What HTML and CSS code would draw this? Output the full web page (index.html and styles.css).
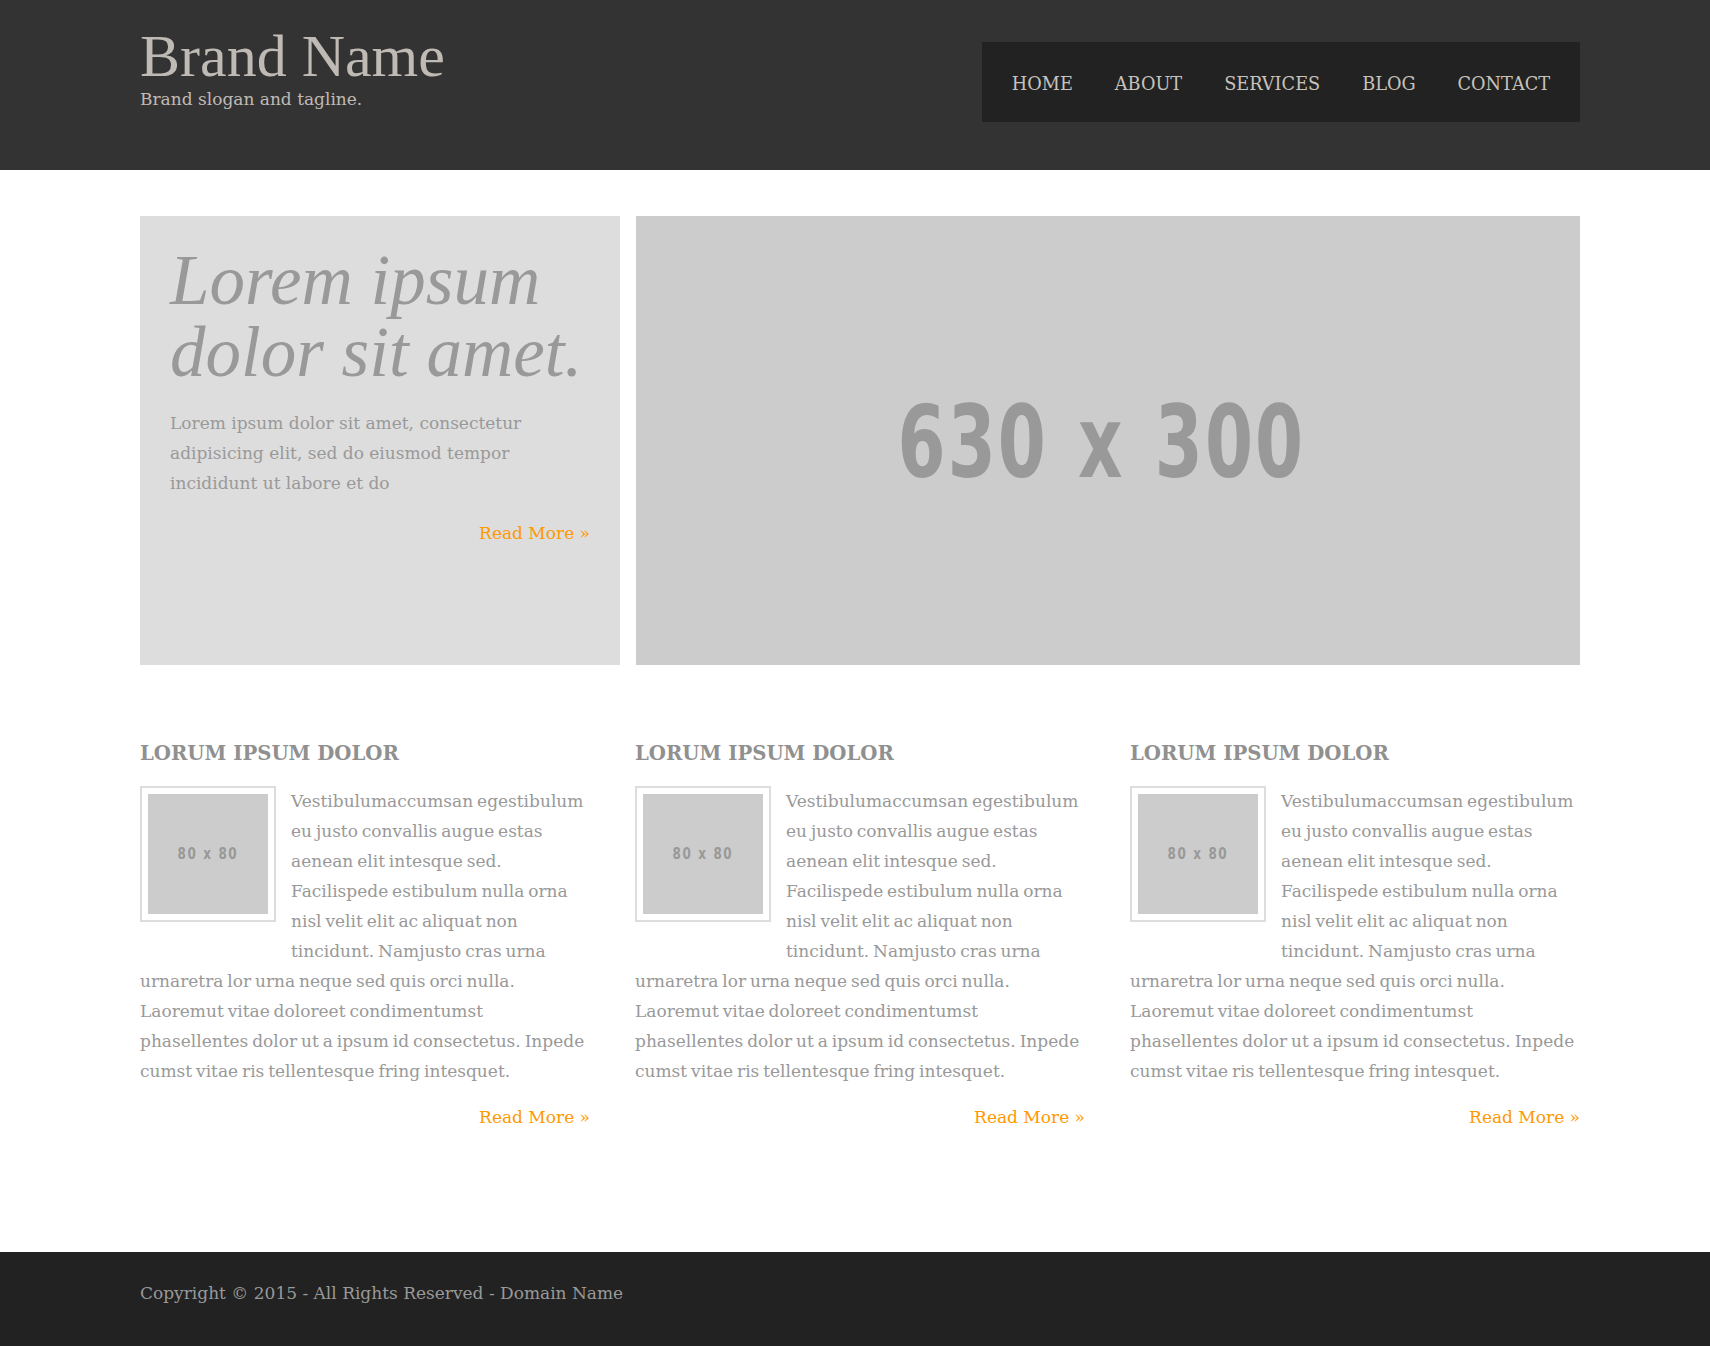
FILE: index.html
```html
<!DOCTYPE html>
<html lang="en">
<head>
<meta charset="utf-8">
<title>Brand Name</title>
<link rel="stylesheet" href="styles.css">
</head>
<body>
<header class="site-header">
  <div class="container header-inner">
    <div class="brand">
      <div class="brand-name">Brand Name</div>
      <div class="brand-tagline">Brand slogan and tagline.</div>
    </div>
    <nav class="main-nav">
      <a href="#">HOME</a>
      <a href="#">ABOUT</a>
      <a href="#">SERVICES</a>
      <a href="#">BLOG</a>
      <a href="#">CONTACT</a>
    </nav>
  </div>
</header>

<main class="container site-main">
  <section class="hero">
    <div class="hero-text">
      <h1>Lorem ipsum dolor sit amet.</h1>
      <p>Lorem ipsum dolor sit amet, consectetur adipisicing elit, sed do eiusmod tempor incididunt ut labore et do</p>
      <div class="read-more hero-more"><a href="#">Read More »</a></div>
    </div>
    <div class="hero-image"><span>630 x 300</span></div>
  </section>

  <section class="features">
    <article class="feature">
      <h2>LORUM IPSUM DOLOR</h2>
      <div class="feature-body">
        <div class="thumb"><div class="thumb-inner"><span>80 x 80</span></div></div>
        <p>Vestibulumaccumsan egestibulum eu justo convallis augue estas aenean elit intesque sed. Facilispede estibulum nulla orna nisl velit elit ac aliquat non tincidunt. Namjusto cras urna urnaretra lor urna neque sed quis orci nulla. Laoremut vitae doloreet condimentumst phasellentes dolor ut a ipsum id consectetus. Inpede cumst vitae ris tellentesque fring intesquet.</p>
      </div>
      <div class="read-more"><a href="#">Read More »</a></div>
    </article>
    <article class="feature">
      <h2>LORUM IPSUM DOLOR</h2>
      <div class="feature-body">
        <div class="thumb"><div class="thumb-inner"><span>80 x 80</span></div></div>
        <p>Vestibulumaccumsan egestibulum eu justo convallis augue estas aenean elit intesque sed. Facilispede estibulum nulla orna nisl velit elit ac aliquat non tincidunt. Namjusto cras urna urnaretra lor urna neque sed quis orci nulla. Laoremut vitae doloreet condimentumst phasellentes dolor ut a ipsum id consectetus. Inpede cumst vitae ris tellentesque fring intesquet.</p>
      </div>
      <div class="read-more"><a href="#">Read More »</a></div>
    </article>
    <article class="feature">
      <h2>LORUM IPSUM DOLOR</h2>
      <div class="feature-body">
        <div class="thumb"><div class="thumb-inner"><span>80 x 80</span></div></div>
        <p>Vestibulumaccumsan egestibulum eu justo convallis augue estas aenean elit intesque sed. Facilispede estibulum nulla orna nisl velit elit ac aliquat non tincidunt. Namjusto cras urna urnaretra lor urna neque sed quis orci nulla. Laoremut vitae doloreet condimentumst phasellentes dolor ut a ipsum id consectetus. Inpede cumst vitae ris tellentesque fring intesquet.</p>
      </div>
      <div class="read-more"><a href="#">Read More »</a></div>
    </article>
  </section>
</main>

<footer class="site-footer">
  <div class="container">Copyright © 2015 - All Rights Reserved - Domain Name</div>
</footer>
</body>
</html>
```

FILE: styles.css
```css
* { box-sizing: border-box; }

html, body {
  margin: 0;
  padding: 0;
}

body {
  background: #fff;
  color: #999;
  font-family: "DejaVu Serif", "Liberation Serif", serif;
  font-size: 17px;
  line-height: 30px;
}

a { text-decoration: none; }

.container {
  width: 1440px;
  margin-left: 140px;
}

/* Header */
.site-header {
  background: #333;
  height: 170px;
}

.header-inner {
  display: flex;
  justify-content: space-between;
  align-items: flex-start;
  padding-top: 26px;
}

.brand-name {
  font-family: "Liberation Serif", "DejaVu Serif", serif;
  font-size: 60px;
  line-height: 60px;
  color: #c0bab5;
}

.brand-tagline {
  margin-top: 3px;
  font-size: 17px;
  line-height: 20px;
  color: #c0bab5;
}

.main-nav {
  display: flex;
  margin-top: 16px;
  padding: 4px 9px 0;
  background: #222;
  height: 80px;
}

.main-nav a {
  display: block;
  padding: 0 21px;
  line-height: 76px;
  font-size: 17.7px;
  color: #c8c2bd;
}

/* Main */
.site-main {
  padding-top: 46px;
  padding-bottom: 120px;
}

.hero {
  display: grid;
  grid-template-columns: 480px 944px;
  gap: 16px;
  height: 449px;
}

.hero-text {
  background: #ddd;
  padding: 28px 30px 0;
}

.hero-text h1 {
  margin: 0;
  font-family: "Liberation Serif", "DejaVu Serif", serif;
  font-style: italic;
  font-weight: normal;
  font-size: 71px;
  line-height: 72px;
  color: #999;
}

.hero-text p {
  margin: 20px 0 0;
}

.read-more {
  text-align: right;
  margin-top: 16px;
}

.read-more a {
  color: #f90;
}

.hero-more {
  margin-top: 20px;
}

.hero-image {
  background: #ccc;
  display: flex;
  align-items: center;
  justify-content: center;
}

.hero-image span {
  font-family: "DejaVu Sans", "Liberation Sans", sans-serif;
  font-weight: bold;
  font-size: 100px;
  letter-spacing: 3px;
  word-spacing: 6px;
  line-height: 100px;
  color: #999;
  margin: 4px 14px 0 0;
  transform: scaleX(0.69);
}

/* Features */
.features {
  display: grid;
  grid-template-columns: repeat(3, 450px);
  gap: 45px;
  margin-top: 77px;
}

.feature h2 {
  margin: 0 0 20px;
  font-size: 19.7px;
  line-height: 24px;
  font-weight: bold;
  color: #909090;
}

.feature p {
  margin: 0;
  word-spacing: -1.5px;
}

.thumb {
  float: left;
  width: 136px;
  height: 136px;
  padding: 6px;
  border: 2px solid #ddd;
  margin: 0 15px 20px 0;
  background: #fff;
}

.thumb-inner {
  display: flex;
  align-items: center;
  justify-content: center;
  width: 120px;
  height: 120px;
  background: #ccc;
}

.thumb-inner span {
  font-family: "DejaVu Sans", "Liberation Sans", sans-serif;
  font-weight: bold;
  font-size: 15px;
  line-height: 20px;
  letter-spacing: 2px;
  color: #999;
  transform: scaleX(0.8);
}

/* Footer */
.site-footer {
  background: #222;
  padding: 26px 0 38px;
  color: #999;
}
```
